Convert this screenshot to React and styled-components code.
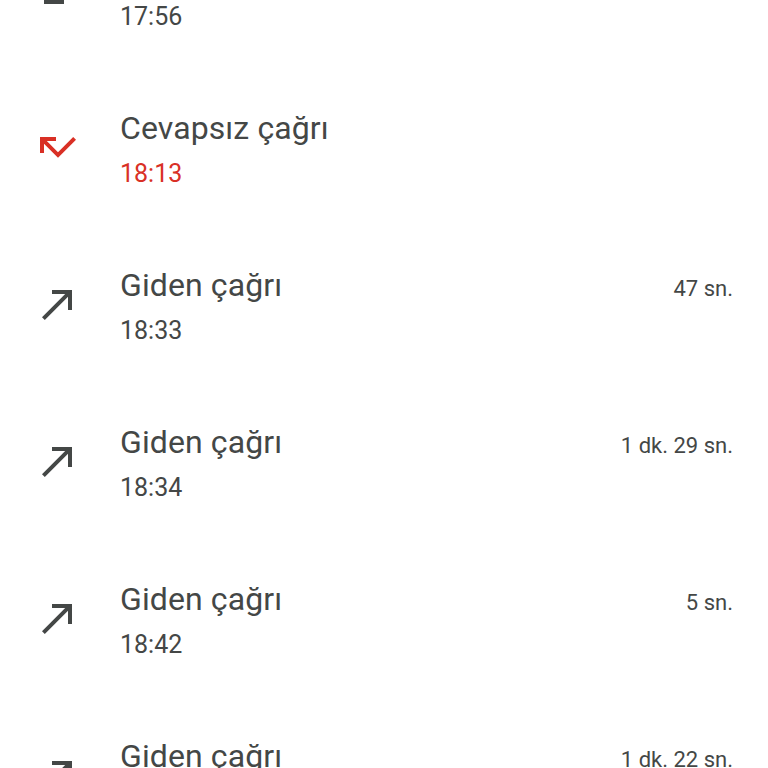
import React from 'react';
import styled, { createGlobalStyle } from 'styled-components';

const GlobalStyle = createGlobalStyle`
  html, body {
    margin: 0;
    padding: 0;
    background: #ffffff;
    overflow: hidden;
  }
  body {
    font-family: Roboto, "Noto Sans", sans-serif;
  }
`;

const Page = styled.div`
  width: 768px;
  height: 768px;
  overflow: hidden;
  background: #fff;
`;

// list is scrolled down a bit, so the first entry is cut off at the top
const List = styled.div`
  display: flex;
  flex-direction: column;
  margin-top: -87px;
`;

const Row = styled.div`
  display: flex;
  align-items: center;
  height: 157px;
  padding: 0 35px 0 34px;
  box-sizing: border-box;
`;

const IconBox = styled.div`
  width: 48px;
  height: 48px;
  flex: none;
  margin-right: 38px;
  margin-bottom: 4px;
  color: ${(p) => (p.$missed ? '#d93025' : '#444746')};
  svg {
    display: block;
  }
`;

const Texts = styled.div`
  flex: 1;
  display: flex;
  flex-direction: column;
  padding-top: 1px;
`;

const TopLine = styled.div`
  display: flex;
  align-items: baseline;
  justify-content: space-between;
`;

const Title = styled.span`
  font-size: 32px;
  line-height: 36px;
  color: #444746;
  letter-spacing: 0.1px;
`;

const Duration = styled.span`
  font-size: 22px;
  color: #444746;
`;

const Time = styled.span`
  font-size: 25px;
  line-height: 30px;
  margin-top: 13px;
  color: ${(p) => (p.$missed ? '#d93025' : '#444746')};
`;

const paths = {
  received: 'M20 5.41L18.59 4 7 15.59V9H5v10h10v-2H8.41z',
  missed: 'M19.59 7L12 14.59 6.41 9H11V7H3v8h2v-4.59l7 7 9-9z',
  outgoing: 'M9 5v2h6.59L4 18.59 5.41 20 17 8.41V15h2V5z',
};

const CallIcon = ({ type }) => (
  <IconBox $missed={type === 'missed'}>
    <svg width="48" height="48" viewBox="0 0 24 24" fill="currentColor">
      <path d={paths[type]} />
    </svg>
  </IconBox>
);

const calls = [
  { type: 'received', title: 'Gelen çağrı', time: '17:56', duration: '2 dk. 4 sn.' },
  { type: 'missed', title: 'Cevapsız çağrı', time: '18:13' },
  { type: 'outgoing', title: 'Giden çağrı', time: '18:33', duration: '47 sn.' },
  { type: 'outgoing', title: 'Giden çağrı', time: '18:34', duration: '1 dk. 29 sn.' },
  { type: 'outgoing', title: 'Giden çağrı', time: '18:42', duration: '5 sn.' },
  { type: 'outgoing', title: 'Giden çağrı', time: '18:51', duration: '1 dk. 22 sn.' },
];

const App = () => {
  return (
    <Page>
      <GlobalStyle />
      <List>
        {calls.map((c, i) => (
          <Row key={i}>
            <CallIcon type={c.type} />
            <Texts>
              <TopLine>
                <Title>{c.title}</Title>
                {c.duration && <Duration>{c.duration}</Duration>}
              </TopLine>
              <Time $missed={c.type === 'missed'}>{c.time}</Time>
            </Texts>
          </Row>
        ))}
      </List>
    </Page>
  );
};

export default App;
